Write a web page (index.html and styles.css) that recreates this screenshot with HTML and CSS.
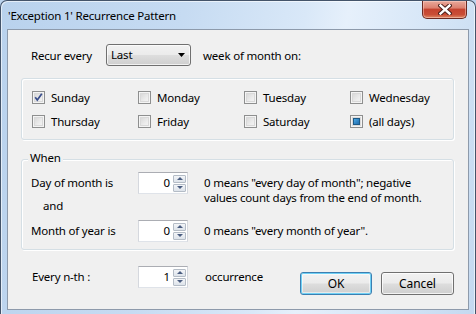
FILE: index.html
```html
<!DOCTYPE html>
<html>
<head>
<meta charset="utf-8">
<link rel="stylesheet" href="styles.css">
</head>
<body>
<div class="window">
  <div class="titlebar">
    <span class="title">'Exception 1' Recurrence Pattern</span>
    <div class="close">
      <svg width="14" height="11" viewBox="0 0 14 11">
        <path d="M2.5 1.5 L11.5 9.5 M11.5 1.5 L2.5 9.5" stroke="#4a1f1a" stroke-width="4.4" stroke-linecap="square" fill="none"/>
        <path d="M2.5 1.5 L11.5 9.5 M11.5 1.5 L2.5 9.5" stroke="#ffffff" stroke-width="2.4" stroke-linecap="square" fill="none"/>
      </svg>
    </div>
  </div>
  <div class="client">
    <div class="recur-row">
      <span class="recur-label">Recur every</span>
      <div class="combo">
        <span class="combo-text">Last</span>
        <svg class="combo-arrow" width="7" height="4" viewBox="0 0 7 4"><path d="M0 0 H7 L3.5 4 Z" fill="#000"/></svg>
      </div>
      <span class="recur-after">week of month on:</span>
    </div>

    <div class="group days">
      <label class="check"><span class="box"><svg width="11" height="11" viewBox="0 0 11 11"><path d="M2.2 5.2 L4.3 8 L8.8 1.8" stroke="#3b4f8c" stroke-width="1.7" fill="none"/></svg></span>Sunday</label>
      <label class="check"><span class="box"></span>Monday</label>
      <label class="check"><span class="box"></span>Tuesday</label>
      <label class="check"><span class="box"></span>Wednesday</label>
      <label class="check"><span class="box"></span>Thursday</label>
      <label class="check"><span class="box"></span>Friday</label>
      <label class="check"><span class="box"></span>Saturday</label>
      <label class="check"><span class="box"><span class="mixed"></span></span>(all days)</label>
    </div>

    <div class="group when">
      <div class="legend">When</div>
      <div class="when-row first">
        <div class="when-labels">
          <div class="when-label">Day of month is</div>
          <div class="when-and">and</div>
        </div>
        <div class="spin">
          <span class="spin-value">0</span>
          <span class="spin-btns"><span class="spin-btn up"></span><span class="spin-btn down"></span></span>
        </div>
        <div class="desc two-line">
          <div class="desc-line">0 means "every day of month"; negative</div>
          <div class="desc-line">values count days from the end of month.</div>
        </div>
      </div>
      <div class="when-row second">
        <div class="when-labels">
          <div class="when-label">Month of year is</div>
        </div>
        <div class="spin">
          <span class="spin-value">0</span>
          <span class="spin-btns"><span class="spin-btn up"></span><span class="spin-btn down"></span></span>
        </div>
        <div class="desc">0 means "every month of year".</div>
      </div>
    </div>

    <div class="bottom-row">
      <span class="nth-label">Every n-th :</span>
      <div class="spin">
        <span class="spin-value">1</span>
        <span class="spin-btns"><span class="spin-btn up"></span><span class="spin-btn down"></span></span>
      </div>
      <span class="nth-after">occurrence</span>
      <div class="buttons">
        <button class="btn ok">OK</button>
        <button class="btn cancel">Cancel</button>
      </div>
    </div>
  </div>
</div>
</body>
</html>
```

FILE: styles.css
```css
html, body {
  margin: 0;
  padding: 0;
  background: #bcd4ee;
}
body {
  font-family: "Noto Sans", "Open Sans", sans-serif;
  font-size: 11.5px;
  letter-spacing: -0.2px;
  color: #000;
}
.window {
  width: 476px;
  height: 314px;
  box-sizing: border-box;
  border: 1px solid #44546a;
  border-bottom: none;
  border-radius: 7px 7px 0 0;
  background: linear-gradient(100deg, #b9d2ed 0%, #c6dbf2 35%, #d9e8f8 58%, #e6f0fb 66%, #d6e6f7 82%, #c4d9f0 100%);
  box-shadow: inset 1px 1px 0 rgba(255,255,255,0.6), inset -1px 0 0 rgba(255,255,255,0.6);
  display: flex;
  flex-direction: column;
  overflow: hidden;
}
.titlebar {
  height: 28px;
  display: flex;
  align-items: flex-start;
  padding-left: 7px;
  flex: none;
}
.title {
  margin-top: 7px;
  line-height: 16px;
  color: #000;
}
.close {
  margin-left: auto;
  margin-right: 8px;
  width: 45px;
  height: 18px;
  box-sizing: border-box;
  border: 1px solid #6b2a22;
  border-top: none;
  border-radius: 0 0 5px 5px;
  background: linear-gradient(#e9a99b 0%, #dc8170 40%, #c5432f 50%, #c94e36 80%, #e08a66 100%);
  box-shadow: inset 0 0 0 1px rgba(255,220,210,0.45);
  display: flex;
  align-items: center;
  justify-content: center;
}
.close svg {
  display: block;
}
.client {
  flex: 1;
  margin: 0 6px 4px 6px;
  border: 1px solid #8d9aab;
  background: #f0f0f0;
  padding: 14px 14px 0 13px;
  display: flex;
  flex-direction: column;
}
.recur-row {
  display: flex;
  align-items: center;
  height: 22px;
  padding-left: 10px;
}
.recur-label {
  width: 75px;
}
.combo {
  width: 85px;
  height: 22px;
  box-sizing: border-box;
  border: 1px solid #707070;
  border-radius: 3px;
  background: linear-gradient(#f2f2f2 0%, #ebebeb 48%, #dddddd 52%, #cfcfcf 100%);
  box-shadow: inset 0 0 0 1px rgba(255,255,255,0.7);
  display: flex;
  align-items: center;
  padding: 0 5px 0 4px;
}
.combo-text {
  flex: 1;
  line-height: 20px;
}
.combo-arrow {
  display: block;
}
.recur-after {
  margin-left: 12px;
}
.group {
  border: 1px solid #d5dfe5;
  border-radius: 3px;
  box-shadow: inset 1px 1px 0 #ffffff, 1px 1px 0 #ffffff;
}
.days {
  margin-top: 12px;
  padding: 6px 0 6px 10px;
  display: grid;
  grid-template-columns: repeat(4, 106px);
  grid-auto-rows: 24px;
}
.check {
  display: flex;
  align-items: center;
  gap: 6px;
}
.box {
  width: 13px;
  height: 13px;
  box-sizing: border-box;
  border: 1px solid #8e8f8f;
  background: linear-gradient(135deg, #d2d2d2 0%, #ececec 60%, #f7f7f7 100%);
  box-shadow: inset 0 0 0 1px #f4f4f4, inset 0 0 0 2px #d9d9d9;
  display: flex;
  align-items: center;
  justify-content: center;
  flex: none;
}
.box svg {
  display: block;
}
.mixed {
  width: 7px;
  height: 7px;
  box-sizing: border-box;
  border: 1px solid #1d5a87;
  background: linear-gradient(135deg, #4fa9e2 0%, #2f83c3 60%, #236fae 100%);
}
.when {
  margin-top: 19px;
  padding: 0 0 7px 9px;
}
.legend {
  width: fit-content;
  margin: -10px 0 0 -3px;
  padding: 0 2px;
  line-height: 16px;
  background: #f0f0f0;
}
.when-row {
  display: flex;
  align-items: flex-start;
}
.when-row.first {
  margin-top: 6px;
}
.when-row.second {
  margin-top: 3px;
}
.when-labels {
  width: 107px;
}
.when-label {
  line-height: 22px;
}
.when-and {
  line-height: 22px;
  margin-top: 1px;
  padding-left: 12px;
}
.desc {
  margin-left: 16px;
  line-height: 22px;
}
.desc.two-line {
  padding-top: 3px;
  line-height: 15px;
}
.desc-line {
  height: 15px;
}
.spin {
  width: 50px;
  height: 22px;
  box-sizing: border-box;
  border: 1px solid;
  border-color: #abadb3 #d5d8de #dfe3e9 #d5d8de;
  background: #fff;
  display: flex;
  align-items: center;
  justify-content: flex-end;
  padding-right: 1px;
  flex: none;
}
.spin-value {
  margin-right: 3px;
  line-height: 18px;
}
.spin-btns {
  display: flex;
  flex-direction: column;
  gap: 1px;
  width: 13px;
}
.spin-btn {
  height: 8px;
  box-sizing: border-box;
  border: 1px solid #b4bcc6;
  border-radius: 1px;
  background: linear-gradient(#f3f5f8, #dde3ea);
  display: flex;
  align-items: center;
  justify-content: center;
}
.spin-btn::after {
  content: "";
  width: 0;
  height: 0;
  border-left: 3px solid transparent;
  border-right: 3px solid transparent;
}
.spin-btn.up::after {
  border-bottom: 3px solid #4a5d80;
}
.spin-btn.down::after {
  border-top: 3px solid #4a5d80;
}
.bottom-row {
  margin-top: 16px;
  padding-left: 11px;
  display: flex;
  align-items: flex-start;
}
.nth-label {
  width: 106px;
  line-height: 22px;
}
.nth-after {
  margin-left: 17px;
  line-height: 22px;
}
.buttons {
  margin-left: auto;
  margin-top: 6px;
  display: flex;
  gap: 9px;
}
.btn {
  height: 23px;
  box-sizing: border-box;
  border: 1px solid #707070;
  border-radius: 3px;
  background: linear-gradient(#f2f2f2 0%, #ebebeb 48%, #dddddd 52%, #cfcfcf 100%);
  box-shadow: inset 0 0 0 1px rgba(255,255,255,0.75);
  font-family: "Noto Sans", "Open Sans", sans-serif;
  font-size: 12px;
  letter-spacing: -0.1px;
  color: #000;
  padding: 0;
  line-height: 20px;
}
.btn.ok {
  width: 72px;
  border-color: #3c7fb1;
  box-shadow: inset 0 0 0 1px #6fd0f5, inset 0 0 0 2px rgba(255,255,255,0.5);
}
.btn.cancel {
  width: 73px;
}
```
